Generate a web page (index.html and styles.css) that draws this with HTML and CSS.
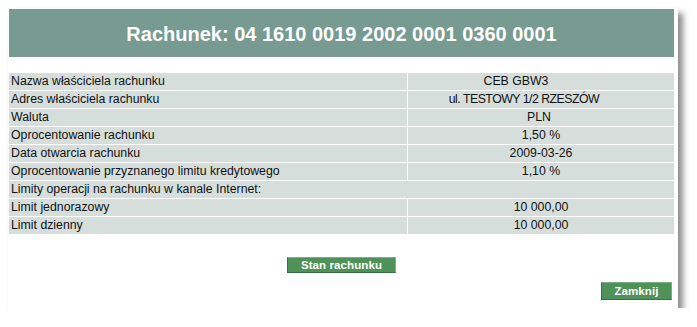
FILE: index.html
```html
<!DOCTYPE html>
<html lang="pl">
<head>
<meta charset="utf-8">
<title>Rachunek</title>
<link rel="stylesheet" href="styles.css">
</head>
<body>
<div class="panel">
  <div class="header"><h1 class="title">Rachunek: 04 1610 0019 2002 0001 0360 0001</h1></div>
  <table class="details">
    <colgroup><col class="col-lbl"><col class="col-val"></colgroup>
    <tr><td class="lbl">Nazwa właściciela rachunku</td><td class="val pad-a">CEB GBW3</td></tr>
    <tr><td class="lbl">Adres właściciela rachunku</td><td class="val pad-b">ul. TESTOWY 1/2 RZESZÓW</td></tr>
    <tr><td class="lbl">Waluta</td><td class="val pad-c">PLN</td></tr>
    <tr><td class="lbl">Oprocentowanie rachunku</td><td class="val">1,50 %</td></tr>
    <tr><td class="lbl">Data otwarcia rachunku</td><td class="val">2009-03-26</td></tr>
    <tr><td class="lbl">Oprocentowanie przyznanego limitu kredytowego</td><td class="val">1,10 %</td></tr>
    <tr><td class="lbl" colspan="2">Limity operacji na rachunku w kanale Internet:</td></tr>
    <tr><td class="lbl">Limit jednorazowy</td><td class="val">10 000,00</td></tr>
    <tr><td class="lbl">Limit dzienny</td><td class="val">10 000,00</td></tr>
  </table>
  <div class="actions"><button class="btn btn-stan" type="button">Stan rachunku</button></div>
  <div class="footer"><button class="btn btn-close" type="button">Zamknij</button></div>
</div>
</body>
</html>
```
FILE: styles.css
```css
html, body {
  margin: 0;
  padding: 0;
  background: #ffffff;
}
body {
  font-family: "Liberation Sans", Arial, sans-serif;
}
.panel {
  box-sizing: border-box;
  margin: 8px 0 0 8px;
  width: 670px;
  height: 300px;
  padding: 1px 4px 0 1px;
  background: #ffffff;
  box-shadow: 5px 5px 6px rgba(0, 0, 0, 0.45);
}
.header {
  height: 48px;
  background: #779a91;
  display: flex;
  align-items: center;
  justify-content: center;
}
.title {
  margin: 0;
  color: #ffffff;
  font-size: 20px;
  font-weight: bold;
  line-height: 1;
  padding-top: 1px;
}
.details {
  margin-top: 16px;
  width: 665px;
  table-layout: fixed;
  border-collapse: separate;
  border-spacing: 0;
  font-size: 12.3px;
  color: #111111;
}
.col-lbl { width: 398px; }
.col-val { width: 267px; }
.details td {
  box-sizing: border-box;
  height: 18px;
  padding: 0;
  background: #d6dedc;
  border-bottom: 1px solid #ffffff;
  line-height: 17px;
  white-space: nowrap;
  overflow: visible;
}
.lbl {
  padding-left: 2px !important;
}
.val {
  border-left: 1px solid #ffffff;
  text-align: center;
}
.pad-a { padding-right: 50px !important; }
.pad-b {
  padding-right: 34px !important;
  letter-spacing: -0.5px;
}
.pad-c { padding-right: 4px !important; }
.actions {
  margin-top: 22px;
  display: flex;
  justify-content: center;
}
.footer {
  margin-top: 9px;
  display: flex;
  justify-content: flex-end;
  padding-right: 2px;
}
.btn {
  box-sizing: border-box;
  padding: 0;
  margin: 0;
  background: #4f9259;
  color: #ffffff;
  font-family: "Liberation Sans", Arial, sans-serif;
  font-size: 11.5px;
  font-weight: bold;
  letter-spacing: 0.1px;
  border: 1px solid;
  border-color: #79b081 #79b081 #3a6f42 #3a6f42;
  cursor: pointer;
}
.btn-stan {
  width: 109px;
  height: 16px;
  line-height: 14px;
}
.btn-close {
  width: 71px;
  height: 18px;
  line-height: 16px;
}
```
